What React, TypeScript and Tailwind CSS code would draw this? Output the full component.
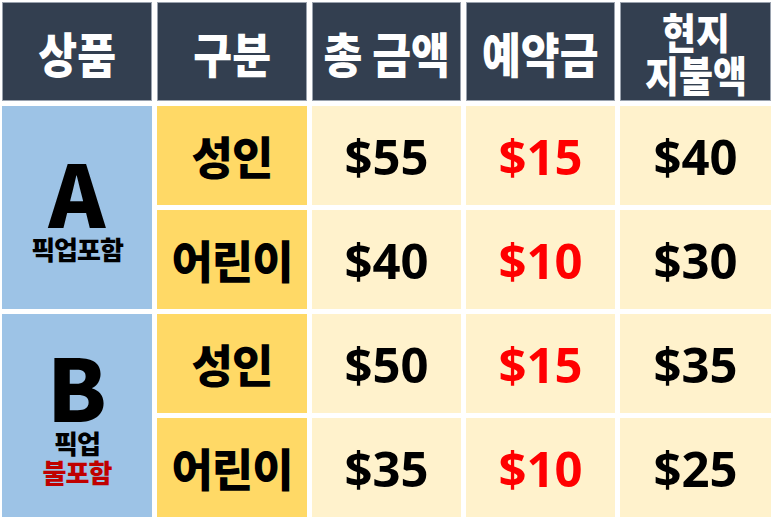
const kr = { fontFamily: '"Noto Sans CJK KR", "Noto Sans", sans-serif' }
const num = { fontFamily: '"Open Sans", "Noto Sans CJK KR", sans-serif' }

type Row = { label: string; total: string; deposit: string; local: string }

const groups: { name: string; rows: Row[] }[] = [
  {
    name: 'A',
    rows: [
      { label: '성인', total: '$55', deposit: '$15', local: '$40' },
      { label: '어린이', total: '$40', deposit: '$10', local: '$30' },
    ],
  },
  {
    name: 'B',
    rows: [
      { label: '성인', total: '$50', deposit: '$15', local: '$35' },
      { label: '어린이', total: '$35', deposit: '$10', local: '$25' },
    ],
  },
]

function Head({ children, small }: { children: React.ReactNode; small?: boolean }) {
  return (
    <div
      className="flex items-center justify-center bg-[#333f50] border border-[#9aa2ae] text-white font-black text-center"
      style={kr}
    >
      <span
        className={`inline-block scale-x-[0.88] whitespace-nowrap ${small ? 'text-[42px] leading-[43px]' : 'text-[48px] leading-[52px]'}`}
      >
        {children}
      </span>
    </div>
  )
}

function Price({ value, red }: { value: string; red?: boolean }) {
  return (
    <div
      className={`flex items-center justify-center bg-[#fff2cc] font-bold text-[49px] leading-[60px] ${red ? 'text-[#ff0000]' : 'text-black'}`}
      style={num}
    >
      {value}
    </div>
  )
}

export default function App() {
  return (
    <div className="w-[773px] h-[525px] bg-white p-[2px]">
      <div className="grid grid-cols-[150px_150px_149px_149px_151px] grid-rows-[99px_99px_99px_99px_99px] gap-[5px]">
        <Head>상품</Head>
        <Head>구분</Head>
        <Head>총 금액</Head>
        <Head>예약금</Head>
        <Head small>
          현지
          <br />
          지불액
        </Head>

        {groups.map((g, gi) => (
          <>
            <div
              key={`g${gi}`}
              className="row-span-2 flex flex-col items-center justify-center bg-[#9dc3e6] pt-1"
              style={kr}
            >
              <div className="font-black text-[86px] leading-[70px]">{g.name}</div>
              {gi === 0 ? (
                <div className="font-black text-[26px] leading-[30px] tracking-[-1px] mt-[8px]">픽업포함</div>
              ) : (
                <div className="font-black text-[26px] leading-[29px] tracking-[-1px] mt-[8px] text-center">
                  픽업
                  <br />
                  <span className="text-[#c00000]">불포함</span>
                </div>
              )}
            </div>
            {g.rows.map((r, ri) => (
              <>
                <div
                  key={`l${gi}${ri}`}
                  className="flex items-center justify-center bg-[#ffd966] font-black text-[45px] leading-[56px] tracking-[-1px]"
                  style={kr}
                >
                  {r.label}
                </div>
                <Price value={r.total} />
                <Price value={r.deposit} red />
                <Price value={r.local} />
              </>
            ))}
          </>
        ))}
      </div>
    </div>
  )
}
